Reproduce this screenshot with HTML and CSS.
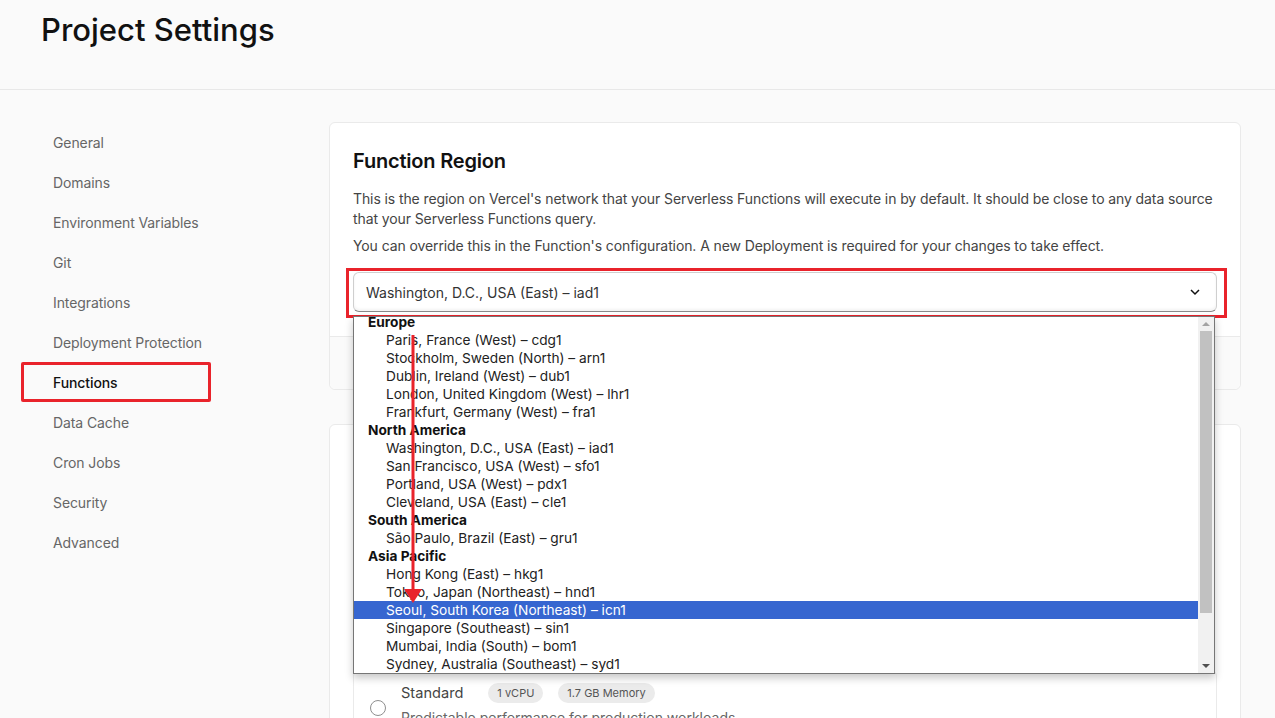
FILE: index.html
```html
<!DOCTYPE html>
<html lang="en">
<head>
    <meta charset="UTF-8">
    <title>Project Settings</title>
    <link rel="stylesheet" href="styles.css">
</head>
<body>
    <header class="top">
        <h1>Project Settings</h1>
    </header>

    <div class="layout">
        <nav class="side">
            <a class="nav-item">General</a>
            <a class="nav-item">Domains</a>
            <a class="nav-item">Environment Variables</a>
            <a class="nav-item">Git</a>
            <a class="nav-item">Integrations</a>
            <a class="nav-item">Deployment Protection</a>
            <a class="nav-item active marked">Functions</a>
            <a class="nav-item">Data Cache</a>
            <a class="nav-item">Cron Jobs</a>
            <a class="nav-item">Security</a>
            <a class="nav-item">Advanced</a>
        </nav>

        <main class="content">
            <section class="card">
                <div class="card-body">
                    <h2>Function Region</h2>
                    <p>This is the region on Vercel's network that your Serverless Functions will execute in by default. It should be close to any data source that your Serverless Functions query.</p>
                    <p>You can override this in the Function's configuration. A new Deployment is required for your changes to take effect.</p>

                    <div class="select-wrap">
                        <div class="select">
                            <span>Washington, D.C., USA (East) – iad1</span>
                            <svg width="12" height="12" viewBox="0 0 12 12"><polyline points="2,4 6,8 10,4" fill="none" stroke="#111" stroke-width="1.5"/></svg>
                        </div>
                        <div class="mark-box"></div>

                        <div class="dropdown">
                            <div class="options">
                                <div class="group">Europe</div>
                                <div class="opt">Paris, France (West) – cdg1</div>
                                <div class="opt">Stockholm, Sweden (North) – arn1</div>
                                <div class="opt">Dublin, Ireland (West) – dub1</div>
                                <div class="opt">London, United Kingdom (West) – lhr1</div>
                                <div class="opt">Frankfurt, Germany (West) – fra1</div>
                                <div class="group">North America</div>
                                <div class="opt">Washington, D.C., USA (East) – iad1</div>
                                <div class="opt">San Francisco, USA (West) – sfo1</div>
                                <div class="opt">Portland, USA (West) – pdx1</div>
                                <div class="opt">Cleveland, USA (East) – cle1</div>
                                <div class="group">South America</div>
                                <div class="opt">São Paulo, Brazil (East) – gru1</div>
                                <div class="group">Asia Pacific</div>
                                <div class="opt">Hong Kong (East) – hkg1</div>
                                <div class="opt">Tokyo, Japan (Northeast) – hnd1</div>
                                <div class="opt selected">Seoul, South Korea (Northeast) – icn1</div>
                                <div class="opt">Singapore (Southeast) – sin1</div>
                                <div class="opt">Mumbai, India (South) – bom1</div>
                                <div class="opt">Sydney, Australia (Southeast) – syd1</div>
                            </div>
                            <div class="scrollbar">
                                <svg class="arrow" width="16" height="14" viewBox="0 0 16 14"><polygon points="4,9 12,9 8,5" fill="#a3a3a3"/></svg>
                                <div class="thumb"></div>
                                <div class="track-rest"></div>
                                <svg class="arrow" width="16" height="14" viewBox="0 0 16 14"><polygon points="4,5 12,5 8,9" fill="#505050"/></svg>
                            </div>
                        </div>

                        <svg class="pointer" width="24" height="280" viewBox="0 0 24 280">
                            <rect x="10.5" y="0" width="3" height="260" fill="#e9232b"/>
                            <polygon points="3,254 21,254 12,268" fill="#e9232b"/>
                        </svg>
                    </div>
                </div>
                <div class="card-footer"></div>
            </section>

            <section class="card">
                <div class="card-body">
                    <h2>Function CPU</h2>
                    <p>Choose the default CPU and memory for your Serverless Functions.</p>
                    <div class="plans">
                        <div class="plan">
                            <span class="radio"></span>
                            <div class="plan-text">
                                <div class="plan-head">
                                    <span class="plan-name">Standard</span>
                                    <span class="badge">1 vCPU</span>
                                    <span class="badge">1.7 GB Memory</span>
                                </div>
                                <div class="plan-desc">Predictable performance for production workloads</div>
                            </div>
                        </div>
                    </div>
                </div>
            </section>
        </main>
    </div>
</body>
</html>
```

FILE: styles.css
```css
body {
    margin: 0;
    font-family: Inter, "Noto Sans", sans-serif;
    background: #fafafa;
    color: #111;
    height: 718px;
    overflow: hidden;
}

.top {
    height: 90px;
    border-bottom: 1px solid #e8e8e8;
    padding: 12px 41px 0;
    box-sizing: border-box;
}

.top h1 {
    margin: 0;
    font-size: 31px;
    line-height: 36px;
    font-weight: 500;
}

.layout {
    display: flex;
    padding: 32px 34px 0 21px;
}

.side {
    width: 308px;
    flex-shrink: 0;
    display: flex;
    flex-direction: column;
}

.nav-item {
    width: 190px;
    height: 40px;
    box-sizing: border-box;
    padding-left: 32px;
    display: flex;
    align-items: center;
    font-size: 14px;
    color: #666;
    letter-spacing: -0.1px;
}

.nav-item.active {
    color: #111;
    font-weight: 500;
}

.nav-item.marked {
    box-shadow: inset 0 0 0 3px #e9232b;
    border-radius: 2px;
}

.content {
    flex: 1;
    display: flex;
    flex-direction: column;
    gap: 34px;
}

.card {
    background: #fff;
    border: 1px solid #eaeaea;
    border-radius: 6px;
}

.card-body {
    padding: 24px 23px 24px;
}

.card h2 {
    margin: 0 0 14px;
    font-size: 20px;
    line-height: 28px;
    font-weight: 600;
    letter-spacing: -0.2px;
}

.card p {
    margin: 0 0 7px;
    font-size: 14px;
    line-height: 20px;
    color: #444;
    letter-spacing: -0.1px;
}

.card-footer {
    height: 52px;
    border-top: 1px solid #eaeaea;
    background: #fafafa;
    border-radius: 0 0 6px 6px;
}

.select-wrap {
    position: relative;
    margin-top: 16px;
}

.select {
    height: 40px;
    box-sizing: border-box;
    border: 1px solid #cfcfcf;
    border-bottom-color: #8a8a8a;
    border-radius: 6px;
    padding: 0 15px 0 12px;
    display: flex;
    align-items: center;
    justify-content: space-between;
    font-size: 14px;
    color: #333;
    box-shadow: inset 0 -2px 3px rgba(0,0,0,0.05);
}

.mark-box {
    position: absolute;
    left: -7px;
    right: -10px;
    top: -4px;
    bottom: -6px;
    border: 3px solid #e9232b;
}

.dropdown {
    position: absolute;
    left: 0;
    top: 44px;
    width: 862px;
    height: 358px;
    box-sizing: border-box;
    background: #fff;
    border: 1px solid #767676;
    box-shadow: 0 4px 8px rgba(0,0,0,0.22);
    display: flex;
    overflow: hidden;
}

.options {
    flex: 1;
    margin-top: -4px;
    font-size: 13.7px;
    color: #222;
}

.group,
.opt {
    height: 18px;
    line-height: 18px;
    white-space: nowrap;
}

.group {
    padding-left: 14px;
    font-weight: 700;
    color: #111;
}

.opt {
    padding-left: 32px;
}

.opt.selected {
    background: #3666d0;
    color: #fff;
}

.scrollbar {
    width: 16px;
    background: #f1f1f1;
    display: flex;
    flex-direction: column;
}

.scrollbar .arrow {
    flex-shrink: 0;
}

.thumb {
    height: 282px;
    margin: 0 2px;
    background: #c1c1c1;
}

.track-rest {
    flex: 1;
}

.pointer {
    position: absolute;
    left: 48px;
    top: 63px;
}

.plans {
    margin-top: 159px;
    border: 1px solid #eaeaea;
    border-radius: 6px;
}

.plan {
    display: flex;
    gap: 15px;
    padding: 12px 16px;
}

.radio {
    width: 14px;
    height: 14px;
    border: 1px solid #8f8f8f;
    border-radius: 50%;
    margin-top: 17px;
    flex-shrink: 0;
    background: #fff;
}

.plan-head {
    display: flex;
    align-items: center;
    gap: 15px;
}

.plan-name {
    font-size: 14.6px;
    color: #444;
    margin-right: 10px;
}

.badge {
    font-size: 11px;
    line-height: 20px;
    padding: 0 9px;
    background: #ebebeb;
    border-radius: 10px;
    color: #555;
}

.plan-desc {
    margin-top: 6px;
    font-size: 14px;
    color: #666;
}
```
